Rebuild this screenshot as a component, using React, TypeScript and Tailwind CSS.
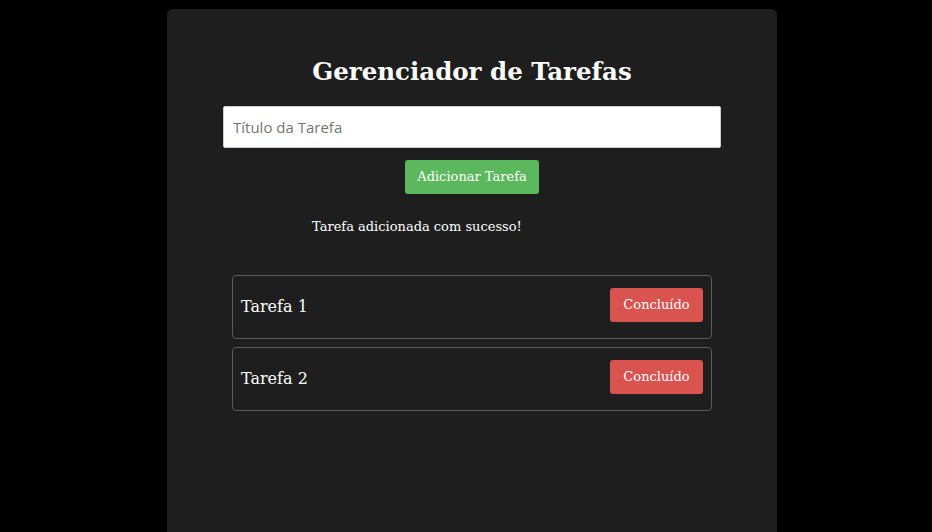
export default function App() {
  const tasks = ["Tarefa 1", "Tarefa 2"]

  return (
    <div className="min-h-[532px] bg-black pt-[9px] font-['DejaVu_Serif',serif]">
      <div className="ml-[167px] flex h-[523px] w-[610px] flex-col items-center overflow-hidden rounded-t-md bg-[#1e1e1e] pt-[44px]">
        <h1 className="text-[24.5px] font-bold leading-[38px] text-white">Gerenciador de Tarefas</h1>

        <input
          type="text"
          placeholder="Título da Tarefa"
          className="mt-[15px] h-[42px] w-[498px] rounded-[2px] border border-[#ccc] bg-white px-[9px] font-['Open_Sans',sans-serif] text-[15px] text-black placeholder:text-[#757575]"
        />

        <button className="mt-[12px] h-[34px] rounded-[3px] bg-[#5cb85c] px-3 text-[13px] text-white">
          Adicionar Tarefa
        </button>

        <p className="mt-[23px] w-full pl-[145px] text-[13px] leading-[20px] text-white">
          Tarefa adicionada com sucesso!
        </p>

        <ul className="mt-[38px] flex w-[480px] flex-col gap-2">
          {tasks.map((t) => (
            <li
              key={t}
              className="flex h-[64px] items-center justify-between rounded-[4px] border border-[#5a5a5a] pl-[8px] pr-[8px]"
            >
              <span className="text-[16px] text-white">{t}</span>
              <button className="mb-[4px] h-[34px] w-[93px] rounded-[3px] bg-[#d9534f] text-[13px] text-white">
                Concluído
              </button>
            </li>
          ))}
        </ul>
      </div>
    </div>
  )
}
